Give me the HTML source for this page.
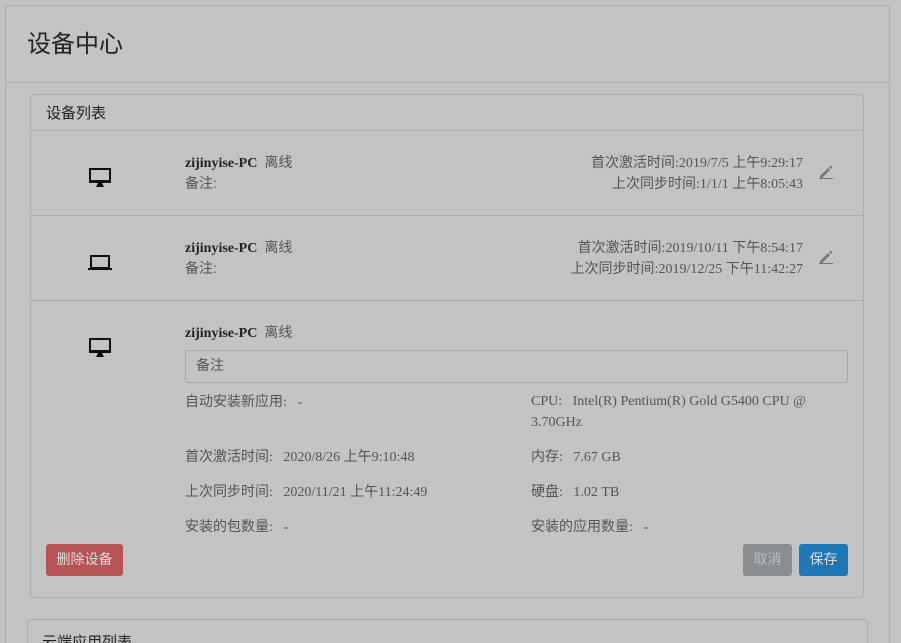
<!DOCTYPE html>
<html style="width:901px;height:643px;overflow:hidden"><head><meta charset="utf-8"><style>
*{box-sizing:border-box;margin:0;padding:0}
body{width:901px;height:643px;background:#c3c3c3;position:relative;overflow:hidden;font-family:"Liberation Serif","Noto Sans CJK SC",serif;font-size:14px;color:#555}
.a{position:absolute;white-space:nowrap}
.cn{font-family:"Liberation Sans","Noto Sans CJK SC",sans-serif}
.b{font-weight:bold;color:#222}
</style></head><body>
<div class="a" style="left:5px;top:5px;width:885px;height:638px;border:1px solid #adadad;border-bottom:none;border-radius:3px 3px 0 0"></div>
<div class="a" style="left:6px;top:82px;width:883px;height:1px;background:#adadad"></div>
<div class="a cn" style="left:27px;top:24px;font-size:24px;color:#222">设备中心</div>

<div class="a" style="left:30px;top:94px;width:834px;height:504px;border:1px solid #adadad;border-radius:4px"></div>
<div class="a" style="left:31px;top:130px;width:832px;height:1px;background:#adadad"></div>
<div class="a cn" style="left:46px;top:102px;font-size:15px;color:#222">设备列表</div>
<div class="a" style="left:31px;top:215px;width:832px;height:1px;background:#adadad"></div>
<div class="a" style="left:31px;top:300px;width:832px;height:1px;background:#adadad"></div>

<svg class="a" style="left:89px;top:168px" width="22" height="20"><rect x="1" y="1" width="20" height="13" fill="none" stroke="#111" stroke-width="2"/><rect x="0" y="12" width="22" height="3" fill="#111"/><path d="M9 15h4l2 4H7z" fill="#111"/></svg>
<svg class="a" style="left:88px;top:255px" width="24" height="17"><rect x="3" y="1" width="18" height="12" fill="none" stroke="#111" stroke-width="2"/><rect x="0" y="13" width="24" height="2" fill="#111"/></svg>
<svg class="a" style="left:89px;top:338px" width="22" height="20"><rect x="1" y="1" width="20" height="13" fill="none" stroke="#111" stroke-width="2"/><rect x="0" y="12" width="22" height="3" fill="#111"/><path d="M9 15h4l2 4H7z" fill="#111"/></svg>

<svg class="a" style="left:818px;top:164px" width="16" height="16"><path d="M2 12l8-8 2 2-8 8H2z M11 3l1.5-1.5 2 2L13 5z" fill="#777"/><rect x="1" y="14" width="14" height="1" fill="#777"/></svg>
<svg class="a" style="left:818px;top:249px" width="16" height="16"><path d="M2 12l8-8 2 2-8 8H2z M11 3l1.5-1.5 2 2L13 5z" fill="#777"/><rect x="1" y="14" width="14" height="1" fill="#777"/></svg>

<div class="a" style="left:185px;top:152px"><span class="b">zijinyise-PC</span>&nbsp; <span class="cn">离线</span></div>
<div class="a cn" style="left:185px;top:173px">备注:</div>
<div class="a" style="right:98px;top:152px;text-align:right">首次激活时间:2019/7/5 上午9:29:17</div>
<div class="a" style="right:98px;top:173px;text-align:right">上次同步时间:1/1/1 上午8:05:43</div>

<div class="a" style="left:185px;top:237px"><span class="b">zijinyise-PC</span>&nbsp; <span class="cn">离线</span></div>
<div class="a cn" style="left:185px;top:258px">备注:</div>
<div class="a" style="right:98px;top:237px;text-align:right">首次激活时间:2019/10/11 下午8:54:17</div>
<div class="a" style="right:98px;top:258px;text-align:right">上次同步时间:2019/12/25 下午11:42:27</div>

<div class="a" style="left:185px;top:322px"><span class="b">zijinyise-PC</span>&nbsp; <span class="cn">离线</span></div>
<div class="a cn" style="left:185px;top:350px;width:663px;height:33px;border:1px solid #a8a8a8;border-radius:3px;padding:4px 10px;color:#555">备注</div>

<div class="a" style="left:185px;top:391px">自动安装新应用:&nbsp;&nbsp; -</div>
<div class="a" style="left:531px;top:391px;white-space:normal;width:300px;line-height:21px">CPU:&nbsp;&nbsp; Intel(R) Pentium(R) Gold G5400 CPU @ 3.70GHz</div>
<div class="a" style="left:185px;top:446px">首次激活时间:&nbsp;&nbsp; 2020/8/26 上午9:10:48</div>
<div class="a" style="left:531px;top:446px">内存:&nbsp;&nbsp; 7.67 GB</div>
<div class="a" style="left:185px;top:481px">上次同步时间:&nbsp;&nbsp; 2020/11/21 上午11:24:49</div>
<div class="a" style="left:531px;top:481px">硬盘:&nbsp;&nbsp; 1.02 TB</div>
<div class="a" style="left:185px;top:516px">安装的包数量:&nbsp;&nbsp; -</div>
<div class="a" style="left:531px;top:516px">安装的应用数量:&nbsp;&nbsp; -</div>

<div class="a cn" style="left:46px;top:544px;width:77px;height:32px;background:#b55454;border-radius:3px;color:#ddd;text-align:center;line-height:31px">删除设备</div>
<div class="a cn" style="left:743px;top:544px;width:49px;height:32px;background:#8b8e90;border-radius:3px;color:#bbb;text-align:center;line-height:31px">取消</div>
<div class="a cn" style="left:799px;top:544px;width:49px;height:32px;background:#1d78b5;border-radius:3px;color:#ddd;text-align:center;line-height:31px">保存</div>

<div class="a" style="left:27px;top:619px;width:841px;height:24px;border:1px solid #adadad;border-bottom:none;border-radius:4px 4px 0 0;overflow:hidden">
<div class="a cn" style="left:14px;top:13px;font-size:15px;color:#222;line-height:20px">云端应用列表</div>
</div>
</body></html>
